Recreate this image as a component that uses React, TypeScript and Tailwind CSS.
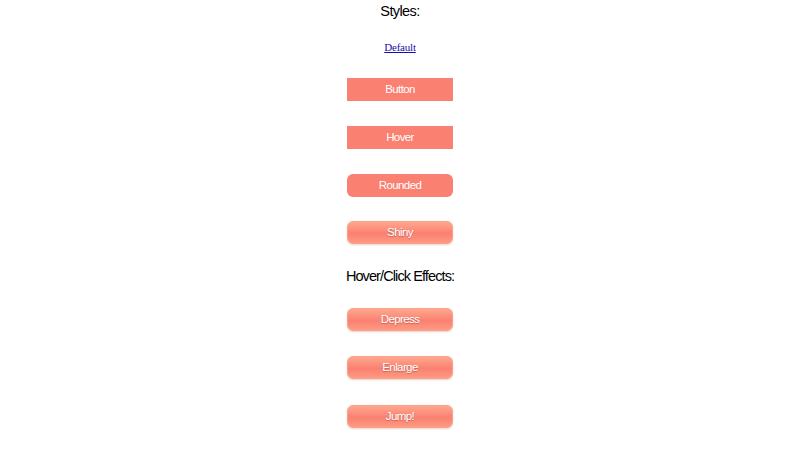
import React from "react";

const base =
  "w-[106px] h-[23px] flex items-center justify-center text-[11.5px] tracking-[-0.6px] text-white [font-family:'Liberation_Sans',Arial,sans-serif]";
const shiny =
  "bg-[linear-gradient(to_bottom,#ffa88c,#fa8072_55%,#ff9a80)] border border-[#f7a18f] rounded-[6px] text-[#f1e6e2] [text-shadow:0_1px_1px_rgba(120,60,50,0.45)] shadow-[0_1px_2px_rgba(200,120,100,0.35)]";

export default function App() {
  return (
    <div className="w-[800px] h-[450px] bg-white flex flex-col items-center [font-family:'Liberation_Sans',Arial,sans-serif]">
      <div className="mt-[3px] h-[17px] leading-[17px] text-[14.5px] tracking-[-0.6px] text-black">Styles:</div>
      <a
        href="#"
        className="mt-[20px] h-[14px] leading-[14px] text-[11px] tracking-[-0.2px] text-[#1a0dab] underline [font-family:'Liberation_Serif','Times_New_Roman',serif]"
      >
        Default
      </a>
      <div className={`mt-[24px] ${base} bg-[#fa8072]`}>Button</div>
      <div className={`mt-[25px] ${base} bg-[#fa8072]`}>Hover</div>
      <div className={`mt-[25px] ${base} bg-[#fa8072] rounded-[6px]`}>Rounded</div>
      <div className={`mt-[24px] ${base} ${shiny}`}>Shiny</div>
      <div className="mt-[24px] h-[17px] leading-[17px] text-[14.5px] tracking-[-0.9px] text-black">Hover/Click Effects:</div>
      <div className={`mt-[23px] ${base} ${shiny}`}>Depress</div>
      <div className={`mt-[25px] ${base} ${shiny}`}>Enlarge</div>
      <div className={`mt-[26px] ${base} ${shiny}`}>Jump!</div>
    </div>
  );
}
